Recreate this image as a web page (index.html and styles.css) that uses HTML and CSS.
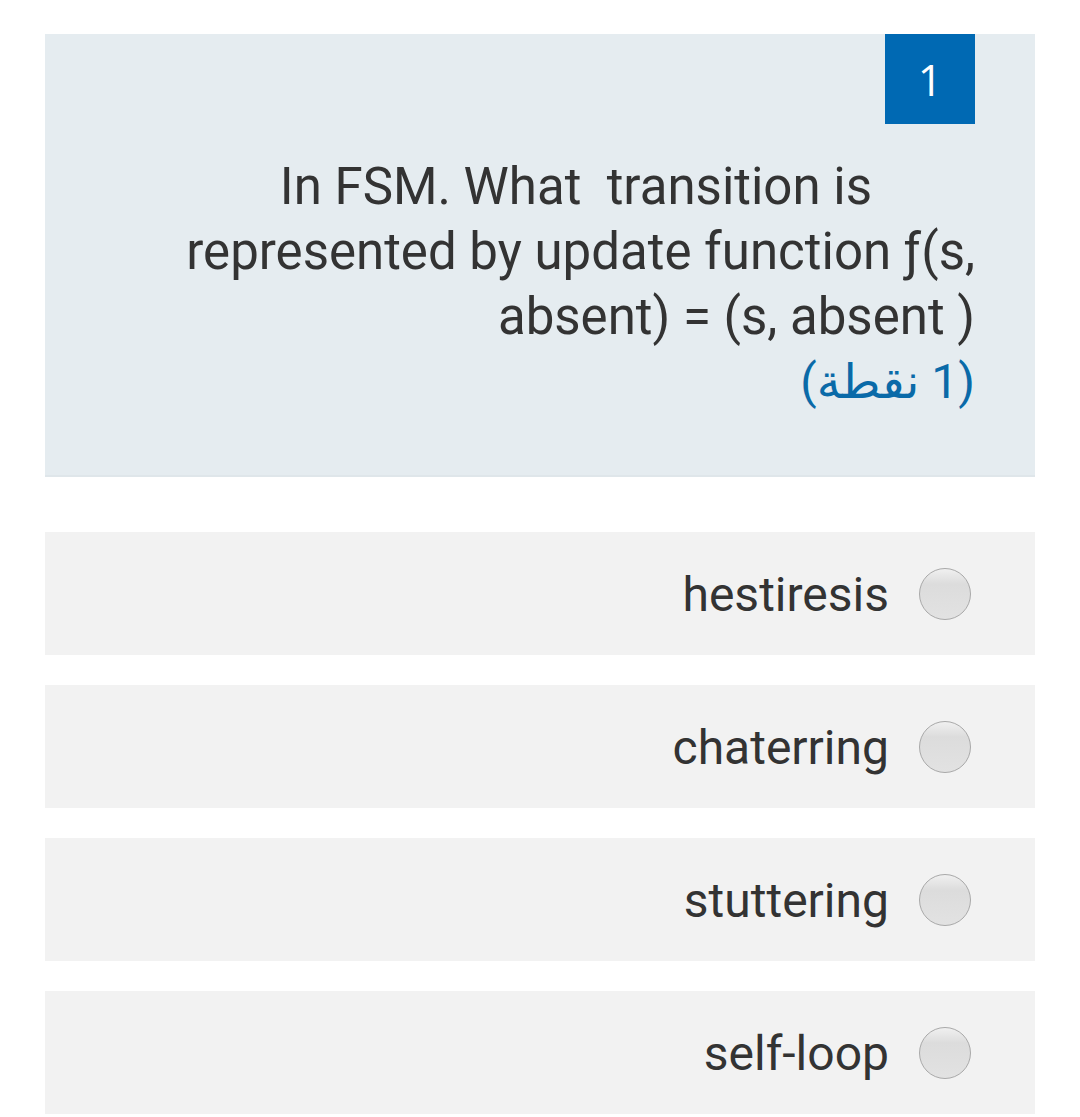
FILE: index.html
```html
<!DOCTYPE html>
<html lang="en">
<head>
<meta charset="utf-8">
<title>Question 1</title>
<link rel="stylesheet" href="styles.css">
</head>
<body>
<main class="page">
  <section class="question">
    <div class="qhead"><span class="badge">1</span></div>
    <div class="qtext">
      <div class="line first">In FSM. What&nbsp; transition is</div>
      <div class="line">represented by update function ƒ(s,</div>
      <div class="line">absent) = (s, absent )</div>
      <div class="line points" dir="rtl">(1 نقطة)</div>
    </div>
  </section>
  <div class="options">
    <label class="option"><span class="otext">hestiresis</span><span class="radio"></span></label>
    <label class="option"><span class="otext">chaterring</span><span class="radio"></span></label>
    <label class="option"><span class="otext">stuttering</span><span class="radio"></span></label>
    <label class="option"><span class="otext">self-loop</span><span class="radio"></span></label>
  </div>
</main>
</body>
</html>
```

FILE: styles.css
```css
html, body {
  margin: 0;
  padding: 0;
  background: #ffffff;
}
body {
  font-family: "Roboto", "DejaVu Sans", sans-serif;
  color: #333333;
}
.page {
  padding: 34px 45px 0 45px;
}
.question {
  background: #e5ecf0;
  height: 443px;
  box-sizing: border-box;
  border-bottom: 2px solid #dfe6ea;
  display: flex;
  flex-direction: column;
}
.qhead {
  display: flex;
  justify-content: flex-end;
  padding-right: 60px;
}
.badge {
  width: 90px;
  height: 90px;
  background: #0069b3;
  color: #ffffff;
  font-family: "Open Sans", sans-serif;
  font-size: 43px;
  display: flex;
  align-items: center;
  justify-content: center;
}
.qtext {
  padding: 30px 60px 0 0;
  font-size: 51px;
  line-height: 65px;
  color: #333333;
}
.line {
  text-align: right;
  white-space: nowrap;
}
.line.first {
  padding-right: 103px;
}
.points {
  color: #0a6aa8;
  font-size: 48px;
}
.options {
  display: flex;
  flex-direction: column;
  gap: 30px;
  margin-top: 55px;
}
.option {
  height: 123px;
  background: #f2f2f2;
  display: flex;
  align-items: center;
  justify-content: flex-end;
  gap: 30px;
  padding-right: 64px;
}
.otext {
  font-size: 48px;
  color: #333333;
  padding-top: 2px;
}
.radio {
  width: 50px;
  height: 50px;
  border-radius: 50%;
  border: 1px solid #a9a9a9;
  background: linear-gradient(#f0f0f0, #dcdcdc 30%, #e2e2e2);
  flex: none;
}
```
